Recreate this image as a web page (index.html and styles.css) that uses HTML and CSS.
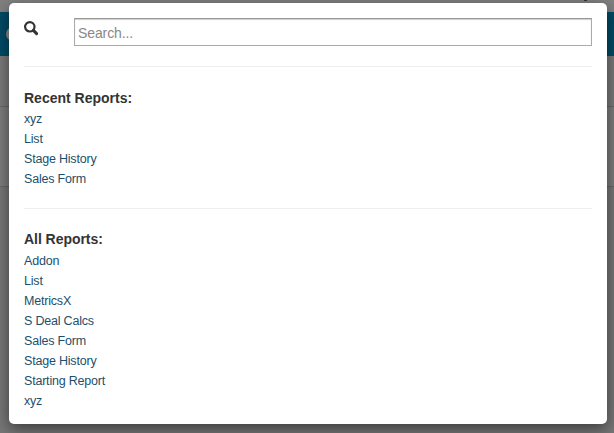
FILE: index.html
```html
<!DOCTYPE html>
<html lang="en">
<head>
<meta charset="utf-8">
<title>Reports</title>
<link rel="stylesheet" href="styles.css">
</head>
<body>
<div class="backdrop" aria-hidden="true">
  <div class="strip"></div>
  <div class="navbar"><span class="logo"></span></div>
  <div class="band band-top"></div>
  <div class="band band-middle"></div>
  <span class="caret"></span>
</div>
<main class="modal">
  <div class="search">
    <svg class="icon" viewBox="0 0 15 15" width="15" height="15"><circle cx="5.8" cy="5.8" r="4.7" fill="none" stroke="#333" stroke-width="2.2"/><path d="M9.4 9.4L12.6 12.6" fill="none" stroke="#333" stroke-width="3" stroke-linecap="round"/></svg>
    <input class="field" type="text" placeholder="Search...">
  </div>
  <hr>
  <section class="recent">
    <h2>Recent Reports:</h2>
    <ul>
      <li><a>xyz</a></li>
      <li><a>List</a></li>
      <li><a>Stage History</a></li>
      <li><a>Sales Form</a></li>
    </ul>
  </section>
  <hr>
  <section class="all">
    <h2>All Reports:</h2>
    <ul>
      <li><a>Addon</a></li>
      <li><a>List</a></li>
      <li><a>MetricsX</a></li>
      <li><a>S Deal Calcs</a></li>
      <li><a>Sales Form</a></li>
      <li><a>Stage History</a></li>
      <li><a>Starting Report</a></li>
      <li><a>xyz</a></li>
    </ul>
  </section>
</main>
</body>
</html>
```
FILE: styles.css
```css
* { box-sizing: border-box; }
body {
  margin: 0;
  height: 433px;
  padding: 3px 7px 9px 9px;
  overflow: hidden;
  background: #777;
  font-family: "Liberation Sans", Arial, sans-serif;
  color: #333;
}
.backdrop { position: absolute; inset: 0; overflow: hidden; }
.strip { height: 12px; background: #808080; }
.navbar { height: 44px; background: #004b66; }
.logo {
  position: absolute;
  left: 6px;
  top: 27px;
  width: 14px;
  height: 14px;
  border: 3px solid #8c8c8c;
  border-radius: 50%;
}
.band { border-bottom: 1px solid #666; }
.band-top { height: 51px; background: #7a7a7a; }
.band-middle { height: 80px; background: #7d7d7d; }
.caret {
  position: absolute;
  left: 584px;
  top: 0;
  width: 3px;
  height: 1px;
  background: #333;
}
.modal {
  position: relative;
  height: 421px;
  padding: 15px;
  background: #fff;
  border-radius: 5px;
  box-shadow: 0 5px 15px rgba(0, 0, 0, .5);
}
.search { display: flex; justify-content: space-between; height: 28px; }
.icon { margin-top: 3px; }
.field {
  width: 518px;
  height: 28px;
  padding: 2px 3px 0;
  border: 1px solid #aaa;
  border-top-color: #999;
  border-radius: 0;
  box-shadow: inset 0 1px 1px #ccc;
  font: 14px "Liberation Sans", Arial, sans-serif;
  letter-spacing: -.1px;
  outline: 0;
}
.field::placeholder { color: #888; opacity: 1; }
hr { height: 1px; margin: 20px 0 21px; border: 0; background: #eee; }
h2 { margin: 0; font-size: 14px; line-height: 20px; }
.recent h2 { margin-bottom: 1px; }
.all h2 { margin-bottom: 2px; letter-spacing: -.05px; }
.recent + hr { margin: 19px 0 20px; }
ul { margin: 0; padding: 0; list-style: none; }
li { height: 20px; font-size: 12.5px; line-height: 20px; letter-spacing: -.2px; }
a { color: #1c4f6b; }
```
